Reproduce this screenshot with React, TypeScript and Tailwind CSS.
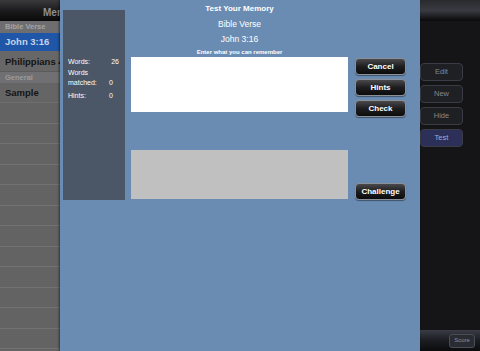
import React from "react";

const font = { fontFamily: '"Liberation Sans", Arial, sans-serif' };

function DarkBtn({ label, className = "" }: { label: string; className?: string }) {
  return (
    <div
      className={`flex items-center justify-center rounded-[4px] border border-[#8a8f98] bg-gradient-to-b from-[#4a4a4c] via-[#1e1e20] to-[#0c0c0d] text-[8px] font-bold text-white shadow-[0_1px_1px_rgba(0,0,0,0.4)] ${className}`}
    >
      {label}
    </div>
  );
}

function SideBtn({ label, blue = false }: { label: string; blue?: boolean }) {
  return (
    <div
      className={`flex h-[18px] w-[43px] items-center justify-center rounded-[4px] border border-[#3a3b44] text-[7.5px] ${
        blue ? "bg-[#2c2f58] text-[#a4aad0]" : "bg-[#1f2024] text-[#858790]"
      }`}
    >
      {label}
    </div>
  );
}

export default function App() {
  const rows = Array.from({ length: 12 });
  return (
    <div className="relative h-[351px] w-[480px] overflow-hidden bg-black" style={font}>
      {/* background app */}
      <div className="flex h-full w-full">
        {/* left list (visible part) */}
        <div className="flex h-full w-[60px] shrink-0 flex-col overflow-hidden whitespace-nowrap bg-[#636363]">
          <div className="h-[21px] bg-gradient-to-b from-[#3a3a3c] via-[#1c1c1e] to-[#0a0a0a] pl-[43px] pt-[5px] text-[10px] font-bold text-[#8f8f94]">
            Memory Verses
          </div>
          <div className="h-[12px] bg-[#6e6e70] pl-[5px] text-[7.5px] font-bold leading-[12px] text-[#a4a4a6]">
            Bible Verse
          </div>
          <div className="h-[18px] bg-[#1f56a8] pl-[5px] text-[9.5px] font-bold leading-[18px] text-[#c8d4e8]">
            John 3:16
          </div>
          <div className="h-[21px] border-b border-[#5c5c5c] bg-[#676767] pl-[5px] text-[9.5px] font-bold leading-[21px] text-[#141414]">
            Philippians 4:13
          </div>
          <div className="h-[11px] bg-[#707072] pl-[5px] text-[7.5px] font-bold leading-[11px] text-[#9a9a9c]">
            General
          </div>
          <div className="h-[20px] border-b border-[#6e6e6e] bg-[#656565] pl-[5px] text-[9.5px] font-bold leading-[20px] text-[#141414]">
            Sample
          </div>
          {rows.map((_, i) => (
            <div key={i} className="h-[20.5px] shrink-0 border-b border-[#727272]" />
          ))}
        </div>
        {/* right detail */}
        <div className="flex h-full flex-1 flex-col bg-[#151517]">
          <div className="h-[21px] bg-gradient-to-b from-[#2a2a2e] via-[#3a3b42] to-[#0a0a0c]" />
          <div className="flex flex-1 flex-col items-end gap-[4px] pr-[17px] pt-[42px]">
            <SideBtn label="Edit" />
            <SideBtn label="New" />
            <SideBtn label="Hide" />
            <SideBtn label="Test" blue />
          </div>
          <div className="flex h-[21px] items-center justify-end bg-gradient-to-b from-[#3a3c46] via-[#1c1d22] to-[#0c0c0e] pr-[5px]">
            <div className="flex h-[14px] w-[26px] items-center justify-center rounded-[3px] border border-[#4a4c56] bg-[#2a2c34] text-[6px] text-[#8d8f98]">
              Score
            </div>
          </div>
        </div>
      </div>

      {/* modal */}
      <div className="absolute left-[60px] top-0 flex h-[351px] w-[360px] bg-[#6a8cb3] shadow-[-1px_0_2px_rgba(0,0,0,0.5)]">
        <div className="ml-[3px] mt-[10px] flex h-[190px] w-[62px] flex-col bg-[#4b5666] pl-[5px] pr-[6px] pt-[47px] text-[7px] leading-[10px] text-white">
          <div className="flex justify-between">
            <span>Words:</span>
            <span>26</span>
          </div>
          <div className="mt-[1px] flex items-end justify-between pr-[6px]">
            <span>
              Words
              <br />
              matched:
            </span>
            <span>0</span>
          </div>
          <div className="mt-[3px] flex justify-between pr-[6px]">
            <span>Hints:</span>
            <span>0</span>
          </div>
        </div>
        <div className="ml-[6px] flex w-[217px] flex-col">
          <div className="pt-[3px] text-center text-[8px] font-bold leading-[12px] text-white">Test Your Memory</div>
          <div className="mt-[3px] text-center text-[8.5px] leading-[12px] text-white">Bible Verse</div>
          <div className="mt-[3px] text-center text-[8.5px] leading-[12px] text-white">John 3:16</div>
          <div className="mt-[3px] text-center text-[6px] font-bold leading-[8px] text-white">Enter what you can remember</div>
          <div className="mt-[1px] h-[55px] bg-white" />
          <div className="mt-[38px] h-[49px] bg-[#c0c0c0]" />
        </div>
        <div className="ml-[7px] flex w-[51px] flex-col pt-[58px]">
          <DarkBtn label="Cancel" className="h-[17px]" />
          <DarkBtn label="Hints" className="mt-[4px] h-[17px]" />
          <DarkBtn label="Check" className="mt-[4px] h-[17px]" />
          <DarkBtn label="Challenge" className="mt-[66px] h-[17px]" />
        </div>
      </div>
    </div>
  );
}
